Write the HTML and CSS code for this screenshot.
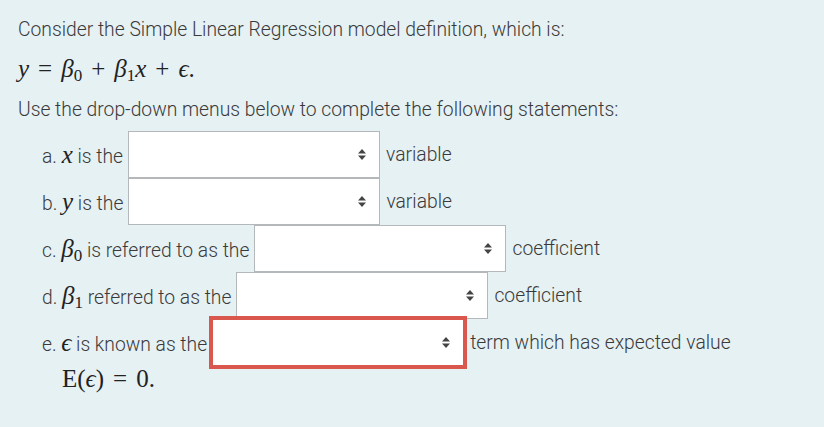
FILE: index.html
```html
<!DOCTYPE html>
<html lang="en">
<head>
<meta charset="utf-8">
<title>Simple Linear Regression</title>
<link rel="stylesheet" href="styles.css">
</head>
<body>
<div class="question">
  <p class="line">Consider the Simple Linear Regression model definition, which is:</p>
  <p class="line math-line"><span class="m"><i>y</i><span class="op">=</span><i>β</i><sub>0</sub><span class="op">+</span><i>β</i><sub>1</sub><i>x</i><span class="op">+</span><i>ϵ</i>.</span></p>
  <p class="line">Use the drop-down menus below to complete the following statements:</p>

  <div class="items">
    <div class="row">
      <span>a. <span class="m"><i>x</i></span> is the</span>
      <div class="select"><svg class="arrows" width="8" height="11" viewBox="0 0 8 11"><path d="M4 0 L8 4.5 L0 4.5 Z M4 11 L8 6.5 L0 6.5 Z"/></svg></div>
      <span>variable</span>
    </div>
    <div class="row">
      <span>b. <span class="m"><i>y</i></span> is the</span>
      <div class="select"><svg class="arrows" width="8" height="11" viewBox="0 0 8 11"><path d="M4 0 L8 4.5 L0 4.5 Z M4 11 L8 6.5 L0 6.5 Z"/></svg></div>
      <span>variable</span>
    </div>
    <div class="row">
      <span>c. <span class="m"><i>β</i><sub>0</sub></span> is referred to as the</span>
      <div class="select"><svg class="arrows" width="8" height="11" viewBox="0 0 8 11"><path d="M4 0 L8 4.5 L0 4.5 Z M4 11 L8 6.5 L0 6.5 Z"/></svg></div>
      <span>coefficient</span>
    </div>
    <div class="row">
      <span>d. <span class="m"><i>β</i><sub>1</sub></span> referred to as the</span>
      <div class="select"><svg class="arrows" width="8" height="11" viewBox="0 0 8 11"><path d="M4 0 L8 4.5 L0 4.5 Z M4 11 L8 6.5 L0 6.5 Z"/></svg></div>
      <span>coefficient</span>
    </div>
    <div class="row">
      <span>e. <span class="m"><i>ϵ</i></span> is known as the</span>
      <div class="select invalid"><svg class="arrows" width="8" height="11" viewBox="0 0 8 11"><path d="M4 0 L8 4.5 L0 4.5 Z M4 11 L8 6.5 L0 6.5 Z"/></svg></div>
      <span>term which has expected value</span>
    </div>
    <div class="cont"><span class="m"><span class="rm">E</span>(<i>ϵ</i>)<span class="op">=</span>0.</span></div>
  </div>
</div>
</body>
</html>
```

FILE: styles.css
```css
html, body {
  margin: 0;
  padding: 0;
}
body {
  background: #e6f1f4;
  color: #3a3a3a;
  font-family: Roboto, "Liberation Sans", sans-serif;
  font-size: 19.3px;
  font-weight: 300;
  width: 824px;
  height: 427px;
  overflow: hidden;
}
.question {
  padding: 10px 0 0 18px;
}
.line {
  margin: 0;
  line-height: 39px;
  white-space: nowrap;
}
.m {
  font-family: "Liberation Serif", "DejaVu Serif", serif;
  font-size: 25px;
  font-weight: 400;
  color: #222;
}
.m i {
  font-style: italic;
}
.m sub {
  font-size: 17px;
  vertical-align: -4px;
  line-height: 0;
}
.m .op {
  display: inline-block;
  padding: 0 9px;
}
.m .rm {
  font-style: normal;
}
.items {
  margin-top: 2px;
  padding-left: 24px;
}
.row {
  display: flex;
  align-items: center;
  gap: 5px;
  height: 47px;
  white-space: nowrap;
}
.select {
  box-sizing: border-box;
  width: 252px;
  height: 47px;
  background: #fff;
  border: 1px solid #b5b8ba;
  display: flex;
  align-items: center;
  justify-content: flex-end;
  padding-right: 13px;
  margin-right: 1px;
}
.select.invalid {
  border-color: #d9574c;
  box-shadow: 0 0 0 3px #d9574c;
}
.arrows {
  fill: #444;
}
.cont {
  padding-left: 20px;
  line-height: 26px;
}
```
